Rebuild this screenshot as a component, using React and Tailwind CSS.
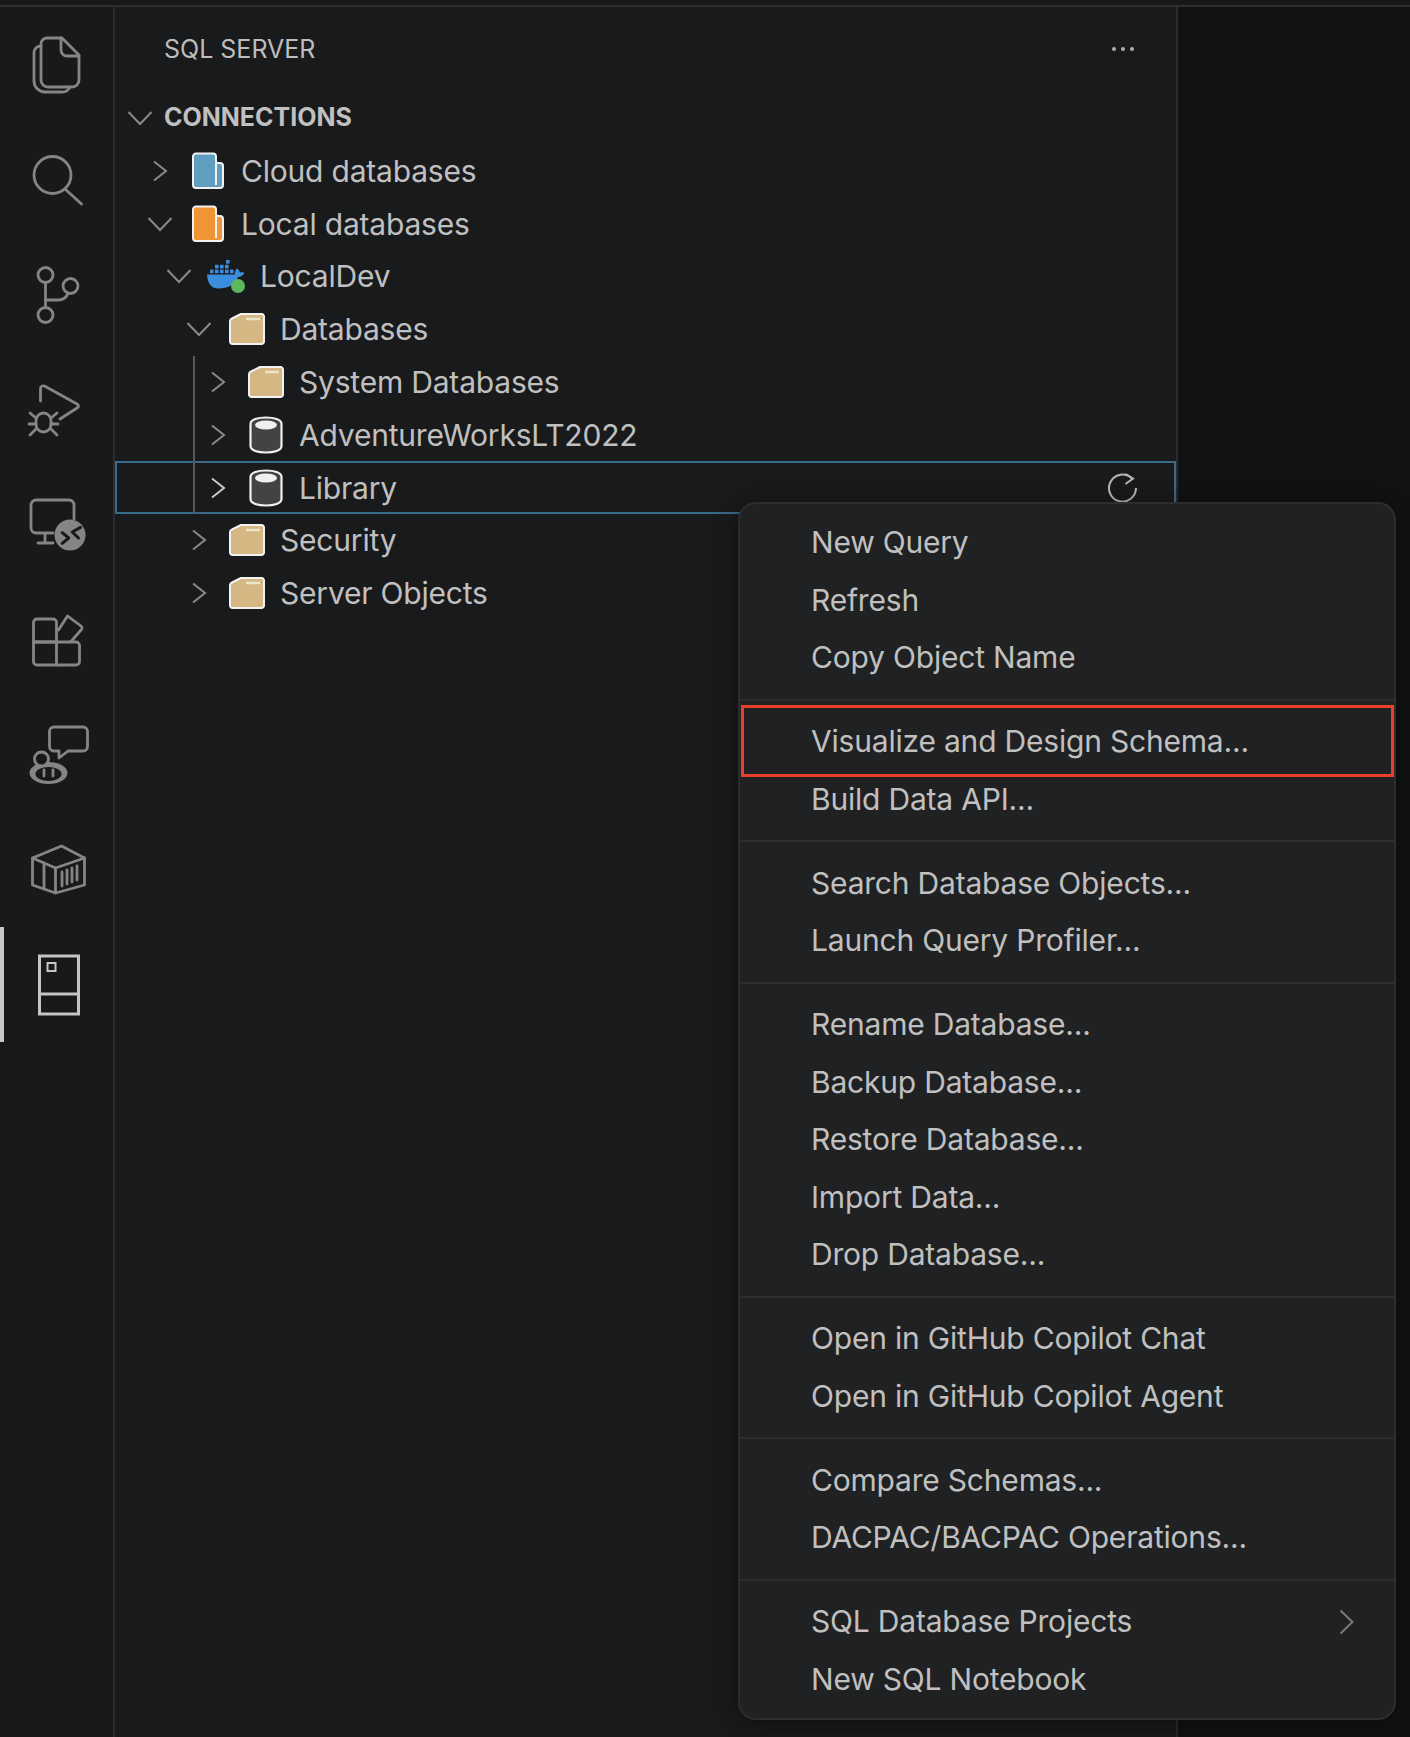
import React from 'react';

const ICON = '#858585';
const BG = '#18191b';

function Icon({ children, color = ICON, width = 2.8 }) {
  return (
    <svg width="64" height="64" viewBox="0 0 64 64" fill="none" stroke={color} strokeWidth={width} strokeLinecap="round" strokeLinejoin="round">
      {children}
    </svg>
  );
}

const activityIcons = [
  <Icon key="files">
    <path d="M22 5H37L54 22V47a7 7 0 0 1-7 7H23a7 7 0 0 1-7-7V11a6 6 0 0 1 6-6Z" />
    <path d="M36 5V17a6 6 0 0 0 6 6H54" />
    <path d="M16 13a7 7 0 0 0-7 6V48a11 11 0 0 0 11 11H36a9 9 0 0 0 9-5" />
  </Icon>,
  <Icon key="search">
    <circle cx="27.5" cy="27" r="18.5" />
    <path d="M40 41L56.5 56" />
  </Icon>,
  <Icon key="git">
    <circle cx="20.5" cy="12" r="7.5" />
    <circle cx="20.5" cy="52" r="7.5" />
    <circle cx="45.5" cy="23" r="7.5" />
    <path d="M20.5 20V44" />
    <path d="M20.5 37H34a10 10 0 0 0 9-7" />
  </Icon>,
  <Icon key="debug">
    <path d="M15.5 23V11q0-4 4-3L52 26q3 2 0 4L35 41" />
    <rect x="11" y="35" width="15" height="19" rx="7.5" />
    <path d="M11 40L5 35M11 46H4M11 51L5 57M26 40L32 35M26 46H33M26 51L32 57" />
  </Icon>,
  <Icon key="remote">
    <path d="M49 26V12a5 5 0 0 0-5-5H11a5 5 0 0 0-5 5V35a5 5 0 0 0 5 5H28" />
    <path d="M20 41V50M13 50H28" />
    <circle cx="45" cy="42" r="15.5" fill={ICON} stroke="none" />
    <path d="M55.5 34.4L47.2 39L53.5 45M37.2 39.7L43.8 45L37.2 50.4" stroke={BG} strokeWidth="3" />
  </Icon>,
  <Icon key="extensions">
    <path d="M12 11H28a3.5 3.5 0 0 1 3.5 3.5V34H8.5V14.5A3.5 3.5 0 0 1 12 11Z" />
    <path d="M8.5 34H51a3.5 3.5 0 0 1 3.5 3.5V53.500a3.500 3.500 0 0 1-3.500 3.500H12a3.500 3.500 0 0 1-3.500-3.500Z" />
    <path d="M31.500 34V57" />
    <path d="M42.500 8L56 18a2.500 2.500 0 0 1 0 4L46 33.500M33.500 22L42.500 8" />
  </Icon>,
  <Icon key="chat">
    <path d="M29 4H58a4.500 4.500 0 0 1 4.500 4.500V23.500A4.500 4.500 0 0 1 58 28H43L34 35V28H29a4.500 4.500 0 0 1-4.500-4.500V8.500A4.500 4.500 0 0 1 29 4Z" />
    <ellipse cx="23.500" cy="50" rx="19" ry="11" fill={ICON} stroke="none" />
    <ellipse cx="23.500" cy="51" rx="13" ry="7" fill={BG} stroke="none" />
    <circle cx="16.500" cy="36" r="7" fill={BG} />
    <path d="M19 47V53M28 47V53" />
  </Icon>,
  <Icon key="containers">
    <path d="M36.500 8L59.500 20V47L30.500 55L7.500 47V20Z" />
    <path d="M7.500 20L30.500 30L59.500 20M30.500 30V55M19 25V51" />
    <path d="M37 34V48M42 32V46M47 30V44M52 28V42" width="2" />
  </Icon>,
  <Icon key="book" color="#c4c4c4" width={3}>
    <g strokeLinecap="butt" strokeLinejoin="miter">
      <rect x="14.500" y="3" width="39" height="58" />
      <path d="M14.500 41H53.500" />
      <rect x="22.500" y="10" width="8" height="8" strokeWidth="2" />
    </g>
  </Icon>,
];

function Chevron({ open, color = '#8a8a8a' }) {
  return (
    <svg width="24" height="24" viewBox="0 0 24 24" fill="none" stroke={color} strokeWidth="2">
      <polyline points={open ? '0.5,6 12,18 23.5,6' : '6,2.500 18,12 6,21.500'} />
    </svg>
  );
}

function FileIcon({ fill }) {
  return (
    <svg width="32" height="38" viewBox="0 0 32 38">
      <path d="M4 1.500H21a3 3 0 0 1 3 3V9a2 2 0 0 0 2 2h2a3 3 0 0 1 3 3V33a3 3 0 0 1-3 3H4a3 3 0 0 1-3-3V4.500a3 3 0 0 1 3-3Z" fill={fill} stroke="#f2f2f2" strokeWidth="2" />
      <path d="M24 11V33" stroke="#f2f2f2" strokeWidth="2" />
    </svg>
  );
}

function FolderIcon() {
  return (
    <svg width="36" height="32" viewBox="0 0 36 32">
      <path d="M3 5.500L12 1H32.500a2.500 2.500 0 0 1 2.500 2.500V28.500a2.500 2.500 0 0 1-2.500 2.500H3.500a2.500 2.500 0 0 1-2.500-2.500V8a3 3 0 0 1 2-2.500Z" fill="#d4b783" stroke="#f2f2f2" strokeWidth="2" strokeLinejoin="round" />
      <path d="M17 6H31" stroke="#eee3cb" strokeWidth="2.500" />
    </svg>
  );
}

function DbIcon() {
  return (
    <svg width="34" height="38" viewBox="0 0 34 38">
      <path d="M1.500 8C1.500 3.500 9 1.500 17 1.500S32.500 3.500 32.500 8V30C32.500 34.500 25 36.500 17 36.500S1.500 34.500 1.500 30Z" fill="#434343" stroke="#f0f0f0" strokeWidth="2.200" />
      <ellipse cx="17" cy="9" rx="11" ry="4.500" fill="#f0f0f0" />
    </svg>
  );
}

function DockerIcon() {
  return (
    <svg width="40" height="36" viewBox="0 0 40 36">
      <g fill="#3b8ede">
        <rect x="19" y="2" width="3.600" height="3.600" />
        <rect x="8" y="6.800" width="3.600" height="3.600" />
        <rect x="13" y="6.800" width="3.600" height="3.600" />
        <rect x="18" y="6.800" width="3.600" height="3.600" />
        <rect x="3" y="11.600" width="3.600" height="3.600" />
        <rect x="8" y="11.600" width="3.600" height="3.600" />
        <rect x="13" y="11.600" width="3.600" height="3.600" />
        <rect x="18" y="11.600" width="3.600" height="3.600" />
        <rect x="23" y="11.600" width="3.600" height="3.600" />
        <path d="M0 16.500H27.500C28 14 28.500 11 30 10.500 31.500 11.500 32.500 13 33 14.500 34.500 14 36.500 14 37.500 14.800 36 18 33.500 19 31 19 28 26 22 30.500 11 30.500 4 30.500 0.500 25 0 16.500Z" />
      </g>
      <circle cx="31" cy="28" r="7" fill="#5cb85c" />
    </svg>
  );
}

const icons = {
  cloud: <FileIcon fill="#5f9ebf" />,
  local: <FileIcon fill="#f09535" />,
  docker: <DockerIcon />,
  folder: <FolderIcon />,
  db: <DbIcon />,
};

function TreeRow({ label, icon, open, pad, selected, refresh }) {
  return (
    <div className={`relative flex items-center h-[52.8px] ${pad} ${selected ? 'outline-2 -outline-offset-2 outline-[#3a6a8a]' : ''}`}>
      <div className="w-[24px] flex justify-center shrink-0">
        <Chevron open={open} color={selected ? '#c8c8c8' : '#8a8a8a'} />
      </div>
      <div className="w-[40px] ml-[15.5px] mr-[13.5px] flex justify-center shrink-0">{icons[icon]}</div>
      <span className="text-[30px] leading-none text-[#c0c0c0] whitespace-nowrap tracking-[-0.2px]">{label}</span>
      {refresh && (
        <svg className="ml-auto mr-[38px]" width="30" height="30" viewBox="0 0 30 30" fill="none" stroke="#b8b8b8" strokeWidth="2">
          <path d="M24 5.500A13.500 13.500 0 1 0 28 15" />
          <path d="M17.500 1L25 5.500 17.500 11" />
        </svg>
      )}
    </div>
  );
}

const menuGroups = [
  ['New Query', 'Refresh', 'Copy Object Name'],
  ['Visualize and Design Schema...', 'Build Data API...'],
  ['Search Database Objects...', 'Launch Query Profiler...'],
  ['Rename Database...', 'Backup Database...', 'Restore Database...', 'Import Data...', 'Drop Database...'],
  ['Open in GitHub Copilot Chat', 'Open in GitHub Copilot Agent'],
  ['Compare Schemas...', 'DACPAC/BACPAC Operations...'],
  ['SQL Database Projects', 'New SQL Notebook'],
];

function MenuItem({ label }) {
  return (
    <div className="relative flex items-center h-[57.5px] pl-[71px] pr-[40px] text-[30px] text-[#c0c0c0] tracking-[-0.2px] whitespace-nowrap">
      {label}
      {label.startsWith('Visualize') && (
        <div className="absolute left-[1px] right-0 -top-[8px] -bottom-[6px] border-[3px] border-[#e8412a]" />
      )}
      {label === 'SQL Database Projects' && (
        <svg className="ml-auto" width="15" height="26" viewBox="0 0 15 26" fill="none" stroke="#7a7a7a" strokeWidth="2">
          <polyline points="1.500,1.500 13.500,13 1.500,24.500" />
        </svg>
      )}
    </div>
  );
}

export default function App() {
  return (
    <div className="relative w-[1410px] h-[1737px] overflow-hidden flex flex-col bg-[#18191b] font-['Inter',sans-serif]">
      <div className="h-[7px] shrink-0 bg-[#17181a] border-b-2 border-[#2d2e30]" />
      <div className="flex-1 flex min-h-0">
        {/* activity bar */}
        <div className="relative w-[115px] shrink-0 bg-[#18191b] border-r-2 border-[#2a2b2d]">
          {activityIcons.map((icon, i) => (
            <div key={i} className={`relative h-[115px] flex items-center justify-center ${i === 8 ? 'border-l-4 border-[#c8c8c8] pr-[4px]' : ''}`}>
              {icon}
            </div>
          ))}
        </div>

        {/* sidebar */}
        <div className="w-[1063px] shrink-0 bg-[#191a1c] border-r-2 border-[#2a2b2d]">
          <div className="h-[84.6px] pt-[27px] pl-[49px] pr-[42px] flex items-start justify-between">
            <span className="text-[25px] leading-[30px] text-[#bdbdbd] whitespace-nowrap">SQL SERVER</span>
            <div className="flex gap-[5px] pt-[13px]">
              <div className="w-[4px] h-[4px] rounded-full bg-[#b0b0b0]" />
              <div className="w-[4px] h-[4px] rounded-full bg-[#b0b0b0]" />
              <div className="w-[4px] h-[4px] rounded-full bg-[#b0b0b0]" />
            </div>
          </div>
          <div className="flex items-center h-[52.8px] pl-[13px]">
            <div className="w-[24px] flex justify-center shrink-0">
              <Chevron open />
            </div>
            <span className="ml-[12px] text-[25px] leading-none font-bold text-[#c0c0c0] whitespace-nowrap">CONNECTIONS</span>
          </div>
          <TreeRow label="Cloud databases" icon="cloud" pad="pl-[33px]" />
          <TreeRow label="Local databases" icon="local" pad="pl-[33px]" open />
          <TreeRow label="LocalDev" icon="docker" pad="pl-[52px]" open />
          <TreeRow label="Databases" icon="folder" pad="pl-[72px]" open />
          <div className="relative">
            <TreeRow label="System Databases" icon="folder" pad="pl-[91px]" />
            <TreeRow label="AdventureWorksLT2022" icon="db" pad="pl-[91px]" />
            <TreeRow label="Library" icon="db" pad="pl-[91px]" selected refresh />
            <div className="absolute left-[78px] top-0 bottom-0 w-[2px] bg-[#585858]" />
          </div>
          <TreeRow label="Security" icon="folder" pad="pl-[72px]" />
          <TreeRow label="Server Objects" icon="folder" pad="pl-[72px]" />
        </div>

        {/* editor area */}
        <div className="flex-1 bg-[#111214]" />
      </div>

      {/* context menu */}
      <div className="absolute left-[738px] top-[502px] w-[658px] rounded-[18px] border-2 border-[#2c2d2f] bg-[#202123] py-[10px] shadow-[0_4px_24px_rgba(0,0,0,0.45)]">
        {menuGroups.map((group, i) => (
          <div key={i}>
            {i > 0 && <div className="h-[2px] my-[12.250px] bg-[#2c2d2f]" />}
            {group.map((label) => (
              <MenuItem key={label} label={label} />
            ))}
          </div>
        ))}
      </div>
    </div>
  );
}
